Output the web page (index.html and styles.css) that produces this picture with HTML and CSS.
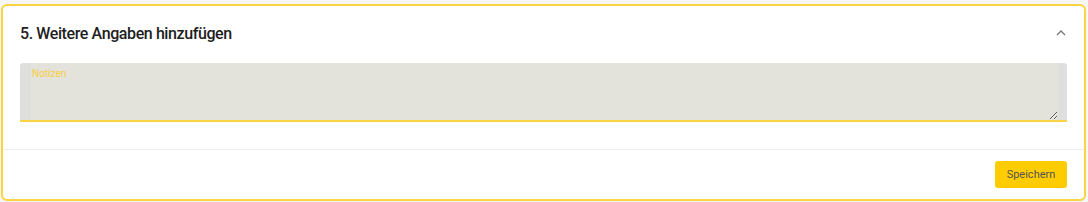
FILE: index.html
```html
<!DOCTYPE html>
<html lang="de">
<head>
<meta charset="utf-8">
<title>Weitere Angaben</title>
<link rel="stylesheet" href="styles.css">
</head>
<body>
<section class="card">
  <div class="card-header">
    <h2 class="card-title">5. Weitere Angaben hinzufügen</h2>
    <svg class="chevron" width="10" height="6" viewBox="0 0 10 6"><path d="M1 5 L5 1 L9 5" fill="none" stroke="#777" stroke-width="1.3"/></svg>
  </div>
  <div class="card-body">
    <div class="field">
      <label class="field-label" for="notes">Notizen</label>
      <textarea id="notes" class="field-input"></textarea>
    </div>
  </div>
  <div class="card-footer">
    <button class="btn-save" type="button">Speichern</button>
  </div>
</section>
</body>
</html>
```
FILE: styles.css
```css
html, body {
  margin: 0;
  padding: 0;
}
body {
  background: #f6f6f4;
  padding: 4px 2px 1px 1px;
  font-family: Roboto, "Liberation Sans", sans-serif;
  box-sizing: border-box;
  height: 202px;
}
.card {
  background: #fff;
  border: 2px solid #fad443;
  border-radius: 6px;
  box-sizing: border-box;
  height: 197px;
  display: flex;
  flex-direction: column;
}
.card-header {
  display: flex;
  align-items: center;
  justify-content: space-between;
  padding: 16px 17px 17px 17px;
}
.card-title {
  margin: 0;
  font-size: 16px;
  line-height: 24px;
  font-weight: 500;
  letter-spacing: -0.4px;
  color: #1e1e1e;
}
.chevron {
  margin-right: 1px;
  margin-top: -3px;
}
.card-body {
  padding: 0 17px 27px 17px;
  border-bottom: 1px solid #ececec;
}
.field {
  position: relative;
  background: #dfdfdd;
  padding: 0 9px 0 11px;
  border-bottom: 2px solid #fad443;
  border-radius: 3px 3px 0 0;
  height: 57px;
}
.field-label {
  position: absolute;
  left: 12px;
  top: 5px;
  font-size: 10px;
  line-height: 12px;
  color: #f6cf3e;
}
.field-input {
  display: block;
  width: 100%;
  height: 57px;
  box-sizing: border-box;
  margin: 0;
  border: 0;
  outline: none;
  background: #e3e2db;
  resize: vertical;
  font-family: inherit;
}
.card-footer {
  flex: 1;
  display: flex;
  justify-content: flex-end;
  align-items: flex-start;
  padding: 11px 17px;
}
.btn-save {
  width: 72px;
  height: 27px;
  background: #ffcc00;
  border: 0;
  border-radius: 3px;
  color: #555;
  font-family: inherit;
  font-size: 11px;
  padding: 0;
}
```
